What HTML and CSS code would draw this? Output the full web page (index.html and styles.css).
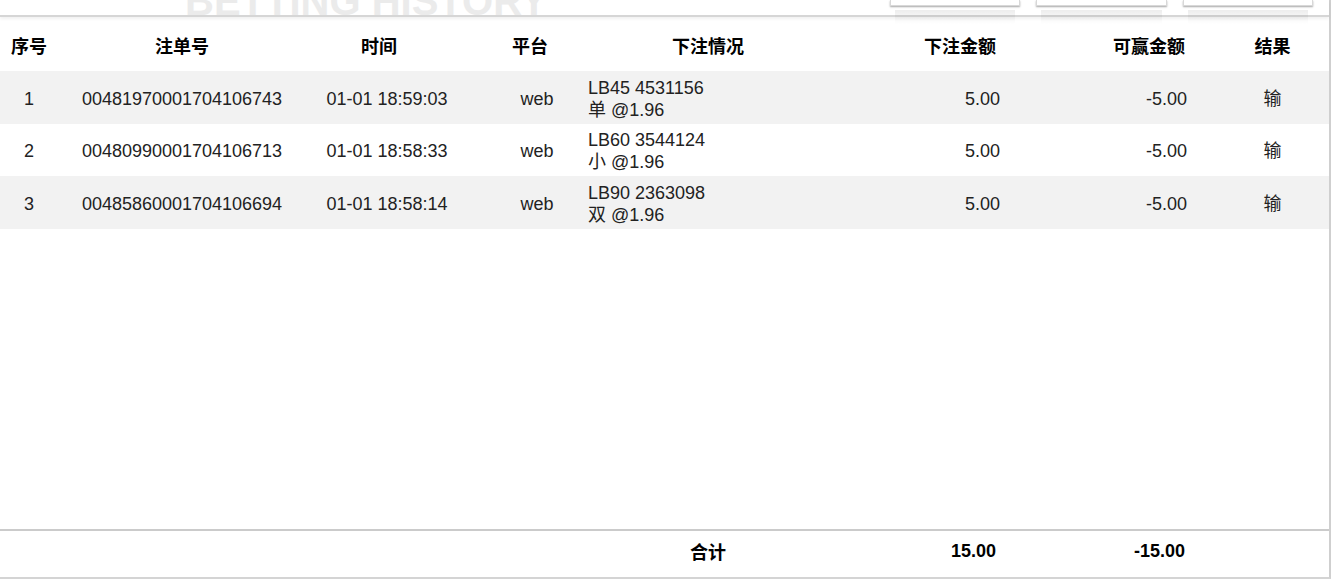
FILE: index.html
```html
<!DOCTYPE html>
<html lang="zh">
<head>
<meta charset="utf-8">
<title>Betting History</title>
<link rel="stylesheet" href="styles.css">
</head>
<body>
<div class="page">
  <div class="topbar">
    <div class="title-clip"><div class="title">BETTING HISTORY</div></div>
    <div class="btns">
      <div class="btn"></div>
      <div class="btn"></div>
      <div class="btn"></div>
    </div>
  </div>
  <table class="grid">
    <colgroup>
      <col class="w1"><col class="w2"><col class="w3"><col class="w4"><col class="w5"><col class="w6"><col class="w7"><col class="w8">
    </colgroup>
    <thead>
      <tr>
        <th class="c1">序号</th><th class="c2">注单号</th><th class="c3">时间</th><th class="c4">平台</th><th class="c5">下注情况</th><th class="c6">下注金额</th><th class="c7">可赢金额</th><th class="c8">结果</th>
      </tr>
    </thead>
    <tbody class="rows">
      <tr class="odd">
        <td class="c1">1</td><td class="c2">00481970001704106743</td><td class="c3">01-01 18:59:03</td><td class="c4">web</td><td class="c5">LB45 4531156<br>单 @1.96</td><td class="c6">5.00</td><td class="c7">-5.00</td><td class="c8">输</td>
      </tr>
      <tr>
        <td class="c1">2</td><td class="c2">00480990001704106713</td><td class="c3">01-01 18:58:33</td><td class="c4">web</td><td class="c5">LB60 3544124<br>小 @1.96</td><td class="c6">5.00</td><td class="c7">-5.00</td><td class="c8">输</td>
      </tr>
      <tr class="odd">
        <td class="c1">3</td><td class="c2">00485860001704106694</td><td class="c3">01-01 18:58:14</td><td class="c4">web</td><td class="c5">LB90 2363098<br>双 @1.96</td><td class="c6">5.00</td><td class="c7">-5.00</td><td class="c8">输</td>
      </tr>
    </tbody>
  </table>
  <div class="spacer"></div>
  <table class="grid foot">
    <colgroup>
      <col class="w1"><col class="w2"><col class="w3"><col class="w4"><col class="w5"><col class="w6"><col class="w7"><col class="w8">
    </colgroup>
    <tr>
      <td></td><td></td><td></td><td></td><td class="c5">合计</td><td class="c6">15.00</td><td class="c7">-15.00</td><td></td>
    </tr>
  </table>
</div>
</body>
</html>
```

FILE: styles.css
```css
html, body {
  margin: 0;
  padding: 0;
  background: #fff;
}
body {
  font-family: "Liberation Sans", "Noto Sans CJK SC", sans-serif;
  font-size: 18px;
  color: #222;
  overflow: hidden;
}
.page {
  width: 1329px;
  height: 577px;
  border-right: 2px solid #cfcfcf;
  border-bottom: 2px solid #d4d4d4;
  display: flex;
  flex-direction: column;
}
.topbar {
  position: relative;
  height: 15px;
  border-bottom: 2px solid #d6d6d6;
  box-shadow: 0 2px 3px rgba(0,0,0,0.06);
  display: flex;
  flex-shrink: 0;
}
.title-clip {
  height: 15px;
  overflow: hidden;
  padding-left: 185px;
}
.title {
  margin-top: -19px;
  font-size: 40px;
  line-height: 40px;
  font-weight: bold;
  color: #ebebeb;
  white-space: nowrap;
}
.btns {
  margin-left: auto;
  display: flex;
  gap: 16px;
  padding-right: 16px;
}
.btn {
  position: relative;
  box-sizing: border-box;
  width: 130px;
  height: 6px;
  background: #fff;
  border: 1px solid #d8d8d8;
  border-top: none;
  box-shadow: 0 1px 2px rgba(0,0,0,0.35);
}
.btn:nth-child(2) { width: 131px; }
.btn::after {
  content: "";
  position: absolute;
  left: 4px;
  right: 4px;
  top: 10px;
  height: 14px;
  background: linear-gradient(to bottom, rgba(0,0,0,0.07), rgba(0,0,0,0));
}
.grid {
  width: 1329px;
  border-collapse: collapse;
  table-layout: fixed;
  flex-shrink: 0;
}
.w1 { width: 58px; }
.w2 { width: 248px; }
.w3 { width: 174px; }
.w4 { width: 100px; }
.w5 { width: 256px; }
.w6 { width: 164px; }
.w7 { width: 190px; }
.w8 { width: 139px; }
th, td {
  padding: 0;
  white-space: nowrap;
}
th {
  height: 52px;
  font-weight: bold;
  color: #000;
  padding-top: 2px;
}
.rows td {
  height: 49.5px;
  padding-top: 3px;
  line-height: 22px;
}
tr.odd td {
  background: #f2f2f2;
}
.c1, .c2, .c3, .c4, .c8 { text-align: center; }
.c5 { text-align: left; }
th.c5 { text-align: center; }
.c6, .c7 { text-align: right; }
th.c3 { padding-right: 28px; }
td.c3 { padding-right: 12px; }
td.c4 { padding-left: 14px; }
td.c5 { padding-left: 8px; }
th.c6 { padding-right: 4px; }
th.c7 { padding-right: 5px; }
td.c7 { padding-right: 3px; }
.c8 { padding-left: 26px; }
.spacer {
  flex: 1;
}
.foot {
  border-top: 2px solid #cbcbcb;
}
.foot td {
  height: 40px;
  padding-top: 0;
  padding-bottom: 6px;
  font-weight: bold;
  color: #000;
  background: #fff;
}
.foot td.c5 { text-align: center; padding-left: 0; }
.foot td.c6 { padding-right: 4px; }
.foot td.c7 { padding-right: 5px; }
```
